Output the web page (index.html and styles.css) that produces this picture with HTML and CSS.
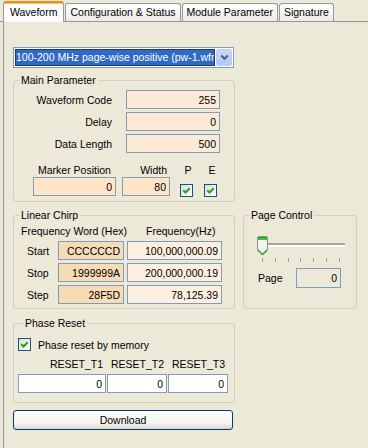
FILE: index.html
```html
<!DOCTYPE html>
<html lang="en">

<head>
  <meta charset="UTF-8">
  <meta name="viewport" content="width=device-width, initial-scale=1.0">
  <title>Waveform</title>
  <link rel="stylesheet" href="styles.css">
</head>

<body>
  <div class="tabs">
    <div class="tab active">Waveform</div>
    <div class="tab">Configuration &amp; Status</div>
    <div class="tab">Module Parameter</div>
    <div class="tab">Signature</div>
  </div>

  <div class="panel">
    <div class="combo">
      <div class="combo-text">100-200 MHz page-wise positive (pw-1.wfm)</div>
      <div class="combo-btn">
        <svg width="9" height="7" viewBox="0 0 9 7"><path d="M1.2 1.5 L4.5 4.8 L7.8 1.5" fill="none" stroke="#4D6185" stroke-width="2"/></svg>
      </div>
    </div>

    <fieldset class="group main">
      <legend>Main Parameter</legend>
      <div class="param-grid">
        <label for="code">Waveform Code</label>
        <input class="field f-main" id="code" value="255">
        <label for="delay">Delay</label>
        <input class="field f-main" id="delay" value="0">
        <label for="length">Data Length</label>
        <input class="field f-main" id="length" value="500">
      </div>
      <div class="marker">
        <div class="mcol m-pos">
          <span>Marker Position</span>
          <input class="field f-marker" value="0">
        </div>
        <div class="mcol m-width">
          <span>Width</span>
          <input class="field f-marker" value="80">
        </div>
        <div class="mcol m-box">
          <span>P</span>
          <div class="check"><svg width="9" height="9" viewBox="0 0 9 9"><path d="M1.3 4.3 L3.5 6.5 L7.7 2.2" fill="none" stroke="#21A121" stroke-width="2"/></svg></div>
        </div>
        <div class="mcol m-box m-e">
          <span>E</span>
          <div class="check"><svg width="9" height="9" viewBox="0 0 9 9"><path d="M1.3 4.3 L3.5 6.5 L7.7 2.2" fill="none" stroke="#21A121" stroke-width="2"/></svg></div>
        </div>
      </div>
    </fieldset>

    <div class="row">
      <fieldset class="group chirp">
        <legend>Linear Chirp</legend>
        <div class="chirp-grid">
          <div class="head-hex">Frequency Word (Hex)</div>
          <div class="head-hz">Frequency(Hz)</div>

          <div class="rowlabel">Start</div>
          <input class="field f-hex" value="CCCCCCD">
          <input class="field f-hz" value="100,000,000.09">

          <div class="rowlabel">Stop</div>
          <input class="field f-hex" value="1999999A">
          <input class="field f-hz" value="200,000,000.19">

          <div class="rowlabel">Step</div>
          <input class="field f-hex" value="28F5D">
          <input class="field f-hz" value="78,125.39">
        </div>
      </fieldset>

      <fieldset class="group page">
        <legend>Page Control</legend>
        <div class="slider">
          <svg class="thumb" width="11" height="20" viewBox="0 0 11 20">
            <path d="M0.5 2 Q0.5 0.5 2 0.5 H9 Q10.5 0.5 10.5 2 V14 L5.5 19 L0.5 14 Z" fill="#F3F3EF" stroke="#8E8F8F"/>
            <rect x="1" y="1" width="9" height="3" fill="#3BC43B"/>
            <rect x="1" y="1" width="9" height="1" fill="#21A121"/>
            <path d="M1 14 L5.5 18.5 L10 14" fill="none" stroke="#21A121" stroke-width="1.2"/>
          </svg>
          <div class="track"></div>
        </div>
        <div class="ticks">
          <i></i><i></i><i></i><i></i><i></i><i></i><i></i>
        </div>
        <div class="page-row">
          <span class="page-label">Page</span>
          <input class="field f-page" value="0" readonly>
        </div>
      </fieldset>
    </div>

    <fieldset class="group phase">
      <legend>Phase Reset</legend>
      <div class="check-row">
        <div class="check"><svg width="9" height="9" viewBox="0 0 9 9"><path d="M1.3 4.3 L3.5 6.5 L7.7 2.2" fill="none" stroke="#21A121" stroke-width="2"/></svg></div>
        <span>Phase reset by memory</span>
      </div>
      <div class="reset-grid">
        <div class="reset-head">RESET_T1</div>
        <div class="reset-head">RESET_T2</div>
        <div class="reset-head">RESET_T3</div>
        <input class="field f-white" value="0">
        <input class="field f-white" value="0">
        <input class="field f-white" value="0">
      </div>
    </fieldset>

    <button class="download">Download</button>
  </div>
</body>

</html>
```

FILE: styles.css
```css
* {
  box-sizing: border-box;
}

body {
  margin: 0;
  background-color: #ECE9D8;
  font-family: "Liberation Sans", Arial, sans-serif;
  font-size: 10.5px;
  color: #000;
}

/* tab strip */
.tabs {
  display: flex;
  align-items: flex-end;
  height: 22px;
  padding-left: 3px;
  border-bottom: 1px solid #919B9C;
}

.tab {
  height: 18px;
  line-height: 17px;
  padding: 0 4px;
  margin-right: 1px;
  border: 1px solid #919B9C;
  border-bottom: none;
  border-radius: 3px 3px 0 0;
  background: linear-gradient(#FFFFFF, #ECEBE6);
  white-space: nowrap;
}

.tab.active {
  height: 21px;
  margin-bottom: -1px;
  padding: 0 6px;
  line-height: 18px;
  background: #FCFCFE;
  border-top: 2px solid #E68B2C;
  box-shadow: inset 0 1px #FFC83C;
}

.panel {
  margin-left: 3px;
  min-height: 426px;
  padding: 25px 0 0 9px;
  border-left: 1px solid #919B9C;
}

/* combo box */
.combo {
  display: flex;
  gap: 1px;
  width: 221px;
  height: 21px;
  padding: 1px;
  background-color: #fff;
  border: 1px solid #7F9DB9;
}

.combo-text {
  flex: 1;
  min-width: 0;
  line-height: 15px;
  color: #fff;
  background-color: #316AC5;
  border: 1px solid #1D3B72;
  white-space: nowrap;
  overflow: hidden;
}

.combo-btn {
  width: 16px;
  display: flex;
  align-items: center;
  justify-content: center;
  background: linear-gradient(#C8D8FD, #B2C7F6);
  border: 1px solid #BCCEF8;
  border-radius: 2px;
}

/* group boxes */
.group {
  margin: 0;
  padding: 0;
  min-width: 0;
  border: 1px solid #D0D0BF;
  border-radius: 3px;
}

.group legend {
  margin-left: 5px;
  padding: 0 2px;
  line-height: 13px;
}

.field {
  display: block;
  width: 100%;
  height: 19px;
  margin: 0;
  padding: 0 3px;
  font-family: inherit;
  font-size: inherit;
  color: #000;
  text-align: right;
  border: 1px solid #7F9DB9;
  outline: none;
}

.f-main {
  background-color: #FDEAD6;
}

.f-marker {
  background-color: #FFE4C8;
}

.f-hex {
  background-color: #F6DBB5;
}

.f-hz {
  background-color: #FDEFE0;
}

.f-white {
  background-color: #fff;
}

.f-page {
  width: 45px;
  height: 20px;
  background-color: #ECE9D8;
}

.check {
  width: 13px;
  height: 13px;
  display: flex;
  align-items: center;
  justify-content: center;
  border: 1px solid #1C5180;
  background: linear-gradient(135deg, #DCDCD7, #FFFFFF);
}

/* main parameter */
.main {
  width: 222px;
  margin-top: 6px;
  padding: 3px 0 4px;
}

.param-grid {
  display: grid;
  grid-template-columns: 98px 94px;
  grid-auto-rows: 19px;
  column-gap: 14px;
  row-gap: 3px;
  align-items: center;
}

.param-grid label {
  text-align: right;
}

.marker {
  display: flex;
  margin: 11px 0 0 19px;
}

.mcol {
  display: flex;
  flex-direction: column;
  align-items: center;
}

.mcol span {
  line-height: 13px;
  white-space: nowrap;
}

.m-pos {
  width: 83px;
}

.m-width {
  width: 48px;
  margin-left: 6px;
  align-items: flex-end;
}

.m-width span {
  padding-right: 3px;
}

.m-box {
  width: 13px;
  margin-left: 10px;
}

.m-box span {
  padding-left: 3px;
}

.m-box .check {
  margin-top: 7px;
}

.m-e {
  margin-left: 11px;
}

/* linear chirp + page control */
.row {
  display: flex;
  gap: 8px;
  margin-top: 7px;
}

.chirp {
  width: 222px;
  padding: 2px 0 4px;
}

.chirp-grid {
  display: grid;
  grid-template-columns: 41px 66px 95px;
  grid-template-rows: 14px 19px 19px 19px;
  column-gap: 3px;
  row-gap: 3px;
  align-items: center;
}

.head-hex {
  grid-column: 1 / 3;
  padding-left: 7px;
  white-space: nowrap;
}

.head-hz {
  padding-left: 19px;
  white-space: nowrap;
}

.rowlabel {
  padding-left: 13px;
}

.page {
  width: 114px;
  padding: 14px 0 0;
}

.slider {
  display: flex;
  align-items: flex-start;
  margin-left: 13px;
}

.track {
  width: 77px;
  margin-top: 7px;
  border-top: 2px solid #A3A39F;
  border-bottom: 2px solid #FFFFFF;
}

.ticks {
  display: flex;
  justify-content: space-between;
  width: 78px;
  margin: 2px 0 0 18px;
}

.ticks i {
  width: 1px;
  height: 4px;
  background-color: #A0A0A0;
}

.page-row {
  display: flex;
  align-items: center;
  margin: 6px 0 0 14px;
}

.page-label {
  width: 38px;
}

/* phase reset */
.phase {
  width: 222px;
  margin-top: 8px;
  padding: 8px 0 9px 4px;
}

.check-row {
  display: flex;
  align-items: center;
  gap: 7px;
}

.reset-grid {
  display: grid;
  grid-template-columns: 88px 60px 60px;
  grid-template-rows: 13px 19px;
  column-gap: 1px;
  row-gap: 3px;
  margin-top: 7px;
}

.reset-head {
  text-align: right;
  padding-right: 3px;
  line-height: 13px;
}

.download {
  display: block;
  width: 220px;
  height: 20px;
  margin-top: 7px;
  padding: 0;
  font-family: inherit;
  font-size: inherit;
  color: #000;
  background: linear-gradient(#FFFFFF, #F3F3EE 70%, #D9D5CB);
  border: 1px solid #003C74;
  border-radius: 3px;
}
```
